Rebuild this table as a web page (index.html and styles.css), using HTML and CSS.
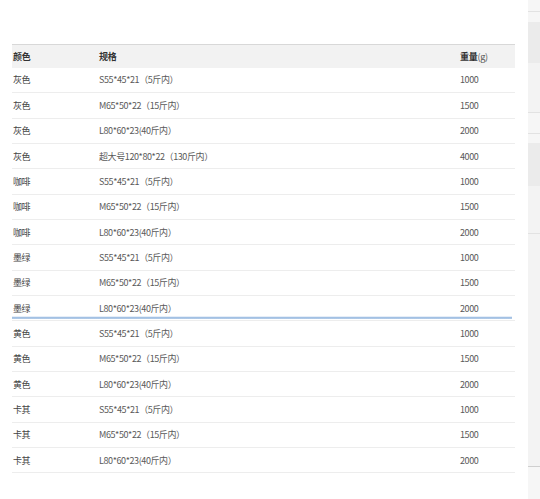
FILE: index.html
```html
<!DOCTYPE html>
<html lang="zh">
<head>
<meta charset="utf-8">
<link rel="stylesheet" href="styles.css">
</head>
<body>
<div class="page">
  <main class="main">
    <div class="table-wrap">
      <table class="spec">
        <thead>
          <tr><th class="c1">颜色</th><th class="c2">规格</th><th class="c3">重量<span class="unit">(g)</span></th></tr>
        </thead>
        <tbody>
          <tr><td>灰色</td><td>S55*45*21（5斤内）</td><td>1000</td></tr>
          <tr><td>灰色</td><td>M65*50*22（15斤内）</td><td>1500</td></tr>
          <tr><td>灰色</td><td>L80*60*23(40斤内）</td><td>2000</td></tr>
          <tr><td>灰色</td><td>超大号120*80*22（130斤内）</td><td>4000</td></tr>
          <tr><td>咖啡</td><td>S55*45*21（5斤内）</td><td>1000</td></tr>
          <tr><td>咖啡</td><td>M65*50*22（15斤内）</td><td>1500</td></tr>
          <tr><td>咖啡</td><td>L80*60*23(40斤内）</td><td>2000</td></tr>
          <tr><td>墨绿</td><td>S55*45*21（5斤内）</td><td>1000</td></tr>
          <tr><td>墨绿</td><td>M65*50*22（15斤内）</td><td>1500</td></tr>
          <tr><td>墨绿</td><td>L80*60*23(40斤内）</td><td>2000</td></tr>
          <tr><td>黄色</td><td>S55*45*21（5斤内）</td><td>1000</td></tr>
          <tr><td>黄色</td><td>M65*50*22（15斤内）</td><td>1500</td></tr>
          <tr><td>黄色</td><td>L80*60*23(40斤内）</td><td>2000</td></tr>
          <tr><td>卡其</td><td>S55*45*21（5斤内）</td><td>1000</td></tr>
          <tr><td>卡其</td><td>M65*50*22（15斤内）</td><td>1500</td></tr>
          <tr><td>卡其</td><td>L80*60*23(40斤内）</td><td>2000</td></tr>
        </tbody>
      </table>
      <div class="seam"></div>
    </div>
  </main>
  <aside class="side">
    <div class="band b1"></div>
    <div class="band line"></div>
    <div class="band b2"></div>
    <div class="band dark b3"></div>
    <div class="band mid b4"></div>
    <div class="band line"></div>
    <div class="band b5"></div>
    <div class="band line"></div>
    <div class="band b6"></div>
    <div class="band dark b7"></div>
    <div class="band mid b8"></div>
    <div class="band line"></div>
    <div class="band mid b9"></div>
    <div class="band line strong"></div>
    <div class="band b10"></div>
  </aside>
</div>
</body>
</html>
```

FILE: styles.css
```css
html, body {
  margin: 0;
  padding: 0;
  background: #ffffff;
}

body {
  font-family: "Noto Sans CJK SC", "Noto Sans", sans-serif;
  font-size: 9px;
  color: #555;
}

.page {
  display: flex;
  width: 540px;
  height: 499px;
  overflow: hidden;
}

.main {
  flex: 0 0 528px;
  padding: 44px 16px 0 12px;
  box-sizing: border-box;
}

.table-wrap {
  position: relative;
  width: 500px;
}

.spec {
  width: 500px;
  border-collapse: collapse;
  table-layout: fixed;
}

.spec .c1 { width: 85px; }
.spec .c2 { width: 360px; }
.spec .c3 { width: 55px; }

.spec thead tr {
  height: 23px;
  background: #f2f2f2;
  border-top: 1px solid #d8d8d8;
}

.spec th {
  text-align: left;
  font-weight: bold;
  color: #333;
  padding: 0 0 0 1px;
  line-height: 1;
  letter-spacing: -0.3px;
}

.spec th .unit {
  font-weight: normal;
  color: #555;
}

.spec tbody tr {
  height: 25.33px;
  border-bottom: 1px solid #ededed;
}

.spec td {
  padding: 0 0 0 1px;
  line-height: 1;
  color: #595959;
  white-space: nowrap;
  letter-spacing: -0.4px;
}

.spec td:first-child {
  color: #444;
}

.seam {
  position: absolute;
  left: 0;
  right: 0;
  top: 272px;
  height: 3px;
  background: linear-gradient(#e6eef8 0, #e6eef8 1px, #9dbde2 1px, #b4cce8 3px);
}

.side {
  flex: 1 1 auto;
  display: flex;
  flex-direction: column;
  background: #f4f4f4;
  box-shadow: inset 2px 0 2px rgba(0, 0, 0, 0.03);
}

.band { flex: 0 0 auto; }
.band.line { height: 1px; background: #e2e2e2; }
.band.line.strong { background: #cfcfcf; }
.band.dark { background: #ebebeb; }
.band.mid { background: #f3f3f3; }

.b1 { height: 11px; background: #f6f6f6; }
.b2 { height: 10px; background: #f6f6f6; }
.b3 { height: 41px; }
.b4 { height: 49px; }
.b5 { height: 20px; background: #f6f6f6; }
.b6 { height: 9px; background: #f6f6f6; }
.b7 { height: 43px; }
.b8 { height: 47px; }
.b9 { height: 232px; }
.b10 { flex: 1 1 auto; background: #f6f6f6; }
```
